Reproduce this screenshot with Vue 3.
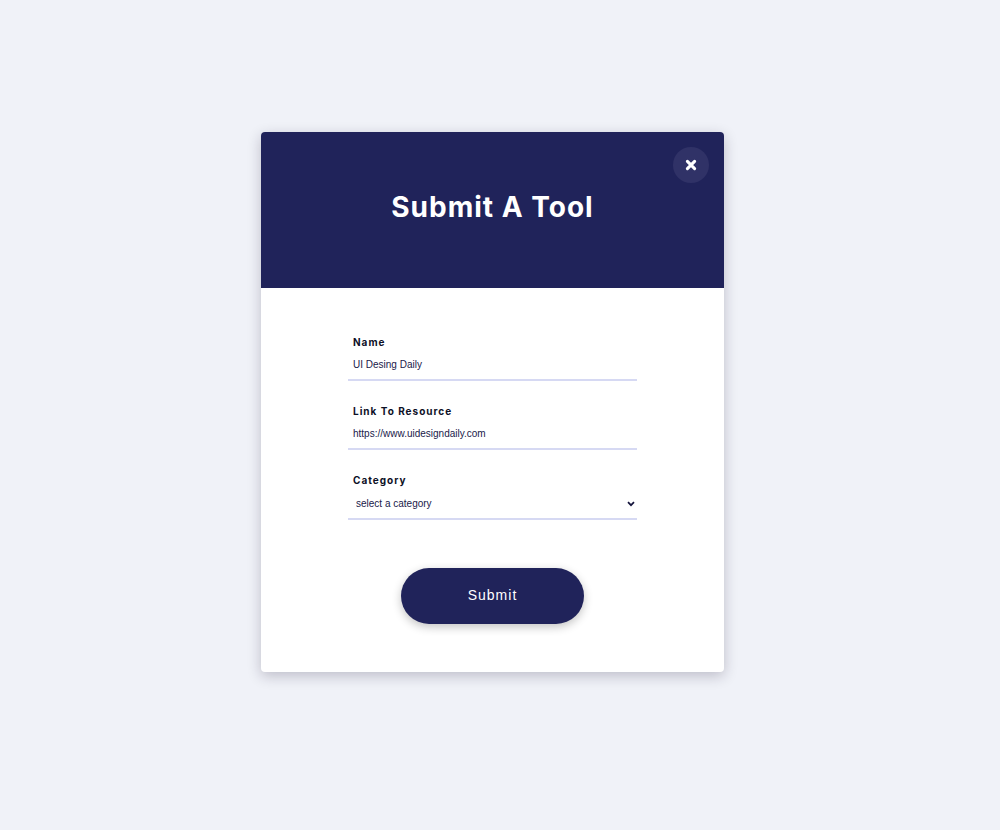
<script setup>
import { ref } from 'vue'

const name = ref('UI Desing Daily')
const link = ref('https://www.uidesigndaily.com')
const category = ref('')
</script>

<template>
  <main class="page">
    <section class="card" aria-labelledby="title">
      <header class="head">
        <h1 id="title">Submit A Tool</h1>
        <button class="close" type="button" aria-label="Close">
          <svg viewBox="0 0 12 12" width="12" height="12" aria-hidden="true">
            <path d="M2.4 2.4 9.6 9.6M9.6 2.4 2.4 9.6" />
          </svg>
        </button>
      </header>
      <form class="form" @submit.prevent>
        <div class="field">
          <label for="name">Name</label>
          <input id="name" v-model="name" type="text" />
        </div>
        <div class="field">
          <label for="link">Link To Resource</label>
          <input id="link" v-model="link" type="text" />
        </div>
        <div class="field">
          <label for="category">Category</label>
          <div class="picker">
            <select id="category" v-model="category">
              <option value="">select a category</option>
              <option value="design">design</option>
              <option value="code">code</option>
            </select>
            <svg class="chevron" viewBox="0 0 8 6" width="8" height="6" aria-hidden="true">
              <path d="M1 1.2 4 4.2 7 1.2" />
            </svg>
          </div>
        </div>
        <button class="submit" type="submit">Submit</button>
      </form>
    </section>
  </main>
</template>

<style>
body {
  background: #f0f2f8;
}
</style>

<style scoped>
.page {
  box-sizing: border-box;
  min-height: 100vh;
  padding: 132px 15px 132px 0;
  background: #f0f2f8;
  font-family: Inter, "Liberation Sans", sans-serif;
}

.card {
  width: 100%;
  max-width: 463px;
  margin: 0 auto;
  border-radius: 4px;
  background: #fff;
  box-shadow: 0 4px 14px rgba(30, 20, 50, 0.24);
}

.head {
  position: relative;
  padding: 56px 16px 62px;
  border-radius: 4px 4px 0 0;
  background: #20235a;
  text-align: center;
}

h1 {
  margin: 0;
  color: #fff;
  font-size: 28px;
  line-height: 38px;
  font-weight: 700;
  letter-spacing: 1px;
}

.close {
  position: absolute;
  top: 15px;
  right: 15px;
  display: flex;
  align-items: center;
  justify-content: center;
  width: 36px;
  height: 36px;
  padding: 0;
  border: 0;
  border-radius: 50%;
  background: #303267;
}

.close path {
  fill: none;
  stroke: #fff;
  stroke-width: 3.1;
  stroke-linecap: round;
}

.form {
  display: flex;
  flex-direction: column;
  gap: 24px;
  padding: 48px 87px;
}

.field {
  display: flex;
  flex-direction: column;
}

label {
  padding: 0 5px 2px;
  color: #0d1026;
  font-size: 10px;
  line-height: 12px;
  font-weight: 700;
  letter-spacing: 1px;
}

input,
select {
  box-sizing: border-box;
  width: 100%;
  height: 31px;
  margin: 0;
  padding: 0 5px;
  border: 0;
  border-bottom: 2px solid #d6d9f3;
  border-radius: 0;
  outline: 0;
  background: transparent;
  color: #20204a;
  font-family: "Liberation Sans", Arial, sans-serif;
  font-size: 10px;
}

.picker {
  position: relative;
}

select {
  display: block;
  height: 32px;
  padding: 0 20px 0 8px;
  appearance: none;
}

.chevron {
  position: absolute;
  top: 13px;
  right: 2px;
  pointer-events: none;
}

.chevron path {
  fill: none;
  stroke: #14143c;
  stroke-width: 1.7;
}

.submit {
  align-self: center;
  width: 183px;
  height: 56px;
  margin-top: 24px;
  padding: 0 0 2px;
  border: 0;
  border-radius: 28px;
  background: #20235a;
  box-shadow: 0 3px 10px rgba(0, 0, 0, 0.24);
  color: #fff;
  font-family: "Liberation Sans", Arial, sans-serif;
  font-size: 14px;
  letter-spacing: 1px;
}
</style>
